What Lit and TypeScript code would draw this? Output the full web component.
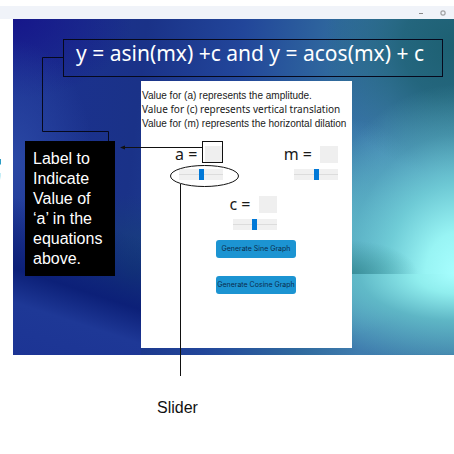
import { LitElement, html, css, svg } from "lit";
import { customElement, property } from "lit/decorators.js";

@customElement("value-control")
class ValueControl extends LitElement {
  @property() name = "a";

  static styles = css`
    :host { display: flex; flex-direction: column; align-items: flex-end; }
    .row { display: flex; align-items: center; gap: 8px; height: 20px; }
    label { font: 16px/20px "Noto Sans", sans-serif; color: #1a1a1a; white-space: nowrap; }
    output { width: 18px; height: 17px; background: #efefef; }
    input {
      appearance: none; display: block; width: 44px; height: 11px; margin: 5px 0 0;
      background: linear-gradient(#dcdcdc, #dcdcdc) 0 5px / 100% 1px no-repeat #f0f0f0;
    }
    input::-webkit-slider-thumb {
      appearance: none; width: 5px; height: 11px; background: #0078d7;
    }
  `;

  render() {
    return html`
      <div class="row">
        <label for="range">${this.name} =</label>
        <output for="range"></output>
      </div>
      <input id="range" type="range" min="-10" max="10" value="0" />
    `;
  }
}

@customElement("app-root")
class AppRoot extends LitElement {
  static styles = css`
    :host {
      display: block; position: relative; padding-top: 6px; overflow: hidden;
      background: #fff; font-family: "Liberation Sans", Arial, sans-serif;
    }
    .titlebar {
      display: flex; justify-content: flex-end; align-items: center; gap: 16px;
      height: 13px; padding-right: 8px; background: #f0f3f9;
    }
    .titlebar button { display: flex; padding: 0; border: 0; background: none; }
    .desktop {
      margin-left: 13px; padding: 20px 11px 7px 12px;
      background:
        radial-gradient(ellipse 70px 34px at 76% 100%, #2c8288bb 0%, #2c828800 100%) top / 100% 76% no-repeat,
        radial-gradient(ellipse 150px 190px at 101% 100%, #a8ffff 0%, #98f4f4 22%, #78dadecc 48%, #62c0c866 74%, #4fa8b800 100%) top / 100% 76% no-repeat,
        radial-gradient(ellipse 190px 90px at 101% 0%, #a8ffff 0%, #90eeee 22%, #66c4cccc 52%, #4890b400 100%) bottom / 100% 24% no-repeat,
        radial-gradient(ellipse 130px 130px at 100% 8%, #1d6072 0%, #1d6072cc 40%, #1d607200 100%),
        linear-gradient(198deg, #0c207800 58%, #0c2078 77%, #1e3896 86%, #1c3494 100%) left / 128px 100% no-repeat,
        radial-gradient(ellipse 80px 120px at 0% 42%, #2a48a4 0%, #2444a000 100%),
        radial-gradient(ellipse 120px 80px at 0% 0%, #16168a 0%, #16168a00 100%),
        radial-gradient(ellipse 70px 80px at 27% 76%, #164078 0%, #16407800 100%),
        radial-gradient(ellipse 100px 110px at 74% 62%, #5cb0c8 0%, #5cb0c800 100%),
        linear-gradient(97deg, #1c3192 0%, #1a3288 28%, #22469a 48%, #306a9e 68%, #3f7cae 80%, #4080aa 100%);
    }
    h1 {
      box-sizing: border-box; height: 38px; margin: 0 0 4px 38px; padding-left: 12px;
      border: 1px solid #06091c; color: #fff; white-space: nowrap;
      font: 21px/27px "Noto Sans", sans-serif;
    }
    .body { display: flex; align-items: flex-start; gap: 26px; padding-right: 91px; }
    .callout {
      box-sizing: border-box; width: 90px; margin: 60px 0 0; padding: 8px 6px 7px 8px;
      background: #000; color: #fff; font-size: 16px; line-height: 20px;
    }
    .panel { box-sizing: border-box; flex: 1; min-width: 0; min-height: 267px; padding: 8px 0 0 1px; background: #fff; }
    .panel p { margin: 0; font-size: 10px; line-height: 14px; white-space: nowrap; color: #1a1a1a; }
    .panel .wide { font-family: "Noto Sans", sans-serif; line-height: 13px; }
    .panel .last { line-height: 16px; }
    .pair { display: flex; justify-content: space-between; padding: 12px 14px 0 33px; }
    .single { display: flex; justify-content: center; padding: 14px 0 10px 12px; }
    .actions { display: flex; flex-direction: column; align-items: center; gap: 18px; padding-left: 18px; }
    .actions button {
      width: 80px; height: 18px; padding: 0; border: 0; border-radius: 3px;
      background: #1c94d2; color: #0b2c4c; font: 7px/18px Inter, sans-serif; white-space: nowrap;
    }
    .caption { margin: 43px 0 0 157px; font-size: 16px; line-height: 19px; color: #111; }
    .lines { position: absolute; left: 0; top: 0; pointer-events: none; }
  `;

  private lines = svg`
    <g fill="none" stroke="#111" stroke-width="1">
      <path stroke="#06091c" d="M63.500 57.500H42.500V131.500H108.500V141" />
      <path d="M124 147.500H202" />
      <rect x="202.500" y="141.500" width="20" height="21" />
      <ellipse cx="204.500" cy="176" rx="34" ry="10.500" />
      <path d="M180.500 184V376" />
    </g>
    <path fill="#111" d="M120 147.500l5-2v4z" />
    <path fill="#2b9cc4" d="M0 159h1v5l-1 1z" />
    <path fill="#c4edf6" d="M0 173h1v3l-1 4z" />
  `;

  render() {
    return html`
      <header class="titlebar">
        <button aria-label="Minimize">
          <svg width="6" height="6"><path d="M1 3.500h4" stroke="#888" /></svg>
        </button>
        <button aria-label="Maximize">
          <svg width="6" height="6"><rect x="1" y="1" width="4" height="4" rx="1" fill="none" stroke="#888" /></svg>
        </button>
      </header>
      <main class="desktop">
        <h1>y = asin(mx) +c and y = acos(mx) + c</h1>
        <div class="body">
          <p class="callout">Label to Indicate Value of ‘a’ in the equations above.</p>
          <section class="panel">
            <p>Value for (a) represents the amplitude.</p>
            <p class="wide">Value for (c) represents vertical translation</p>
            <p class="last">Value for (m) represents the horizontal dilation</p>
            <div class="pair">
              <value-control name="a"></value-control>
              <value-control name="m"></value-control>
            </div>
            <div class="single"><value-control name="c"></value-control></div>
            <div class="actions">
              <button>Generate Sine Graph</button>
              <button>Generate Cosine Graph</button>
            </div>
          </section>
        </div>
      </main>
      <p class="caption">Slider</p>
      <svg class="lines" width="454" height="454" aria-hidden="true">${this.lines}</svg>
    `;
  }
}
